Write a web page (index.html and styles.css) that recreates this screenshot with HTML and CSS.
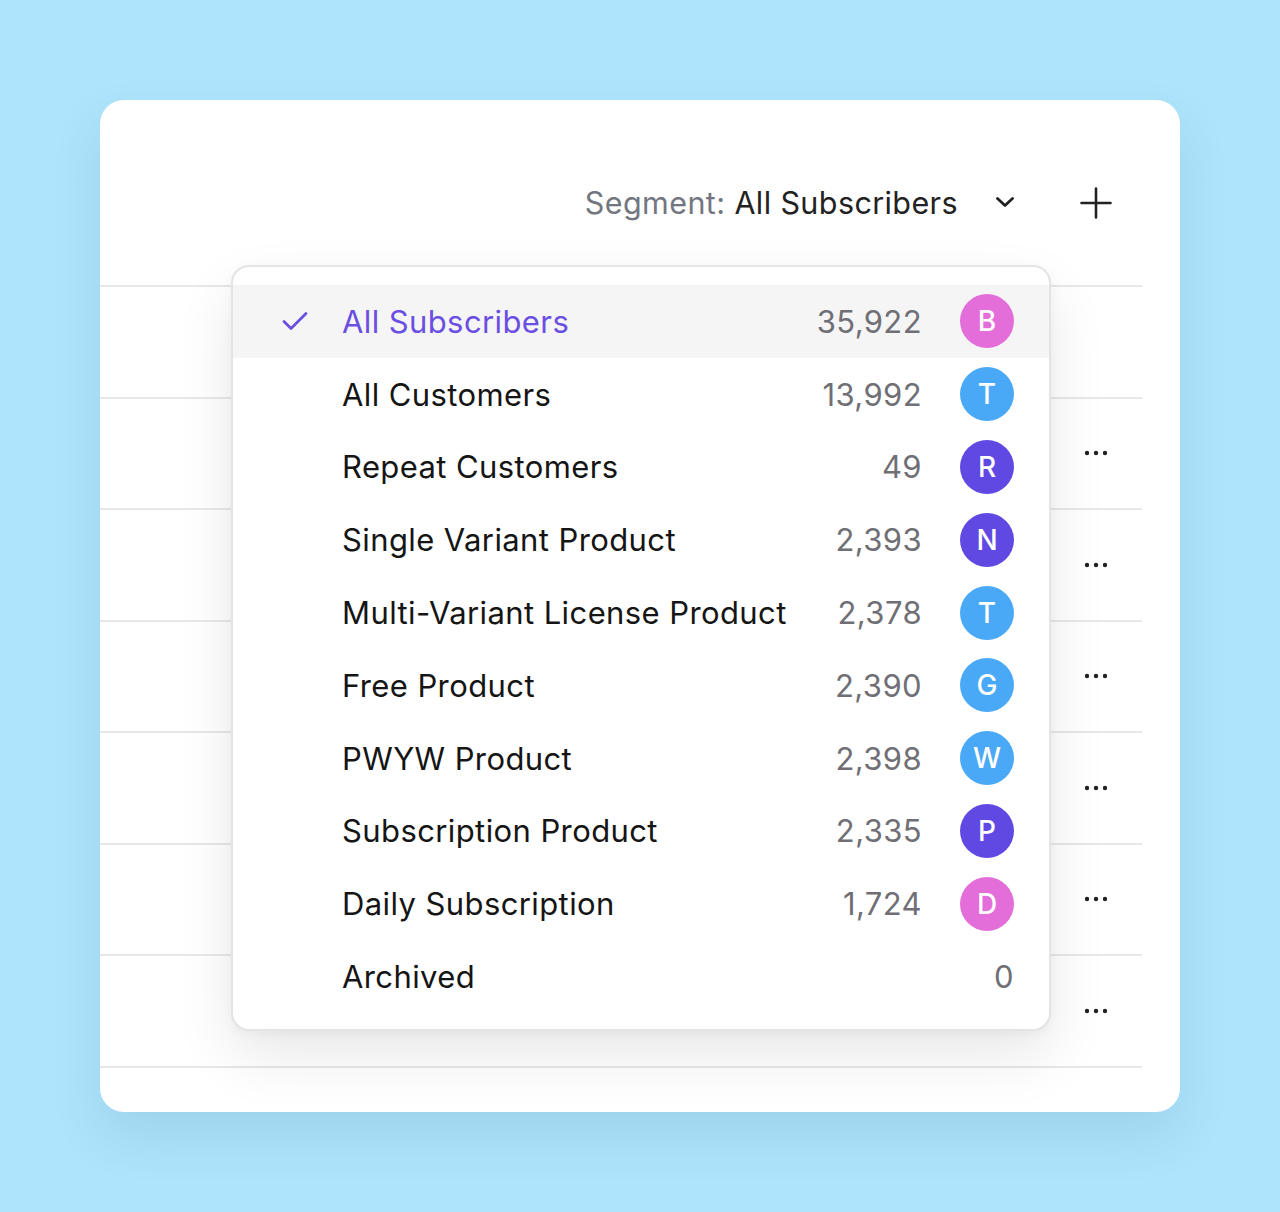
FILE: index.html
```
<!DOCTYPE html>
<html lang="en">
<head>
<meta charset="utf-8">
<title>Segments</title>
<link rel="stylesheet" href="styles.css">
</head>
<body>
<div class="card">
  <div class="header">
    <span class="seg-label">Segment:</span>
    <span class="seg-value">All Subscribers</span>
    <svg class="chevron" width="18" height="11" viewBox="0 0 18 11"><path d="M1.5 1.5 L9 8.5 L16.5 1.5" fill="none" stroke="#222" stroke-width="2.8" stroke-linecap="round" stroke-linejoin="round"/></svg>
    <svg class="plus" width="32" height="32" viewBox="0 0 32 32"><path d="M16 1.5 V30.5 M1.5 16 H30.5" fill="none" stroke="#222" stroke-width="2.6" stroke-linecap="round"/></svg>
  </div>
  <div class="table">
    <div class="trow"></div>
    <div class="trow"><svg class="dots" width="24" height="6" viewBox="0 0 24 6"><circle cx="3" cy="3" r="2.2"/><circle cx="12" cy="3" r="2.2"/><circle cx="21" cy="3" r="2.2"/></svg></div>
    <div class="trow"><svg class="dots" width="24" height="6" viewBox="0 0 24 6"><circle cx="3" cy="3" r="2.2"/><circle cx="12" cy="3" r="2.2"/><circle cx="21" cy="3" r="2.2"/></svg></div>
    <div class="trow"><svg class="dots" width="24" height="6" viewBox="0 0 24 6"><circle cx="3" cy="3" r="2.2"/><circle cx="12" cy="3" r="2.2"/><circle cx="21" cy="3" r="2.2"/></svg></div>
    <div class="trow"><svg class="dots" width="24" height="6" viewBox="0 0 24 6"><circle cx="3" cy="3" r="2.2"/><circle cx="12" cy="3" r="2.2"/><circle cx="21" cy="3" r="2.2"/></svg></div>
    <div class="trow"><svg class="dots" width="24" height="6" viewBox="0 0 24 6"><circle cx="3" cy="3" r="2.2"/><circle cx="12" cy="3" r="2.2"/><circle cx="21" cy="3" r="2.2"/></svg></div>
    <div class="trow"><svg class="dots" width="24" height="6" viewBox="0 0 24 6"><circle cx="3" cy="3" r="2.2"/><circle cx="12" cy="3" r="2.2"/><circle cx="21" cy="3" r="2.2"/></svg></div>
  </div>

  <div class="dropdown">
    <div class="item selected">
      <span class="check"><svg width="26" height="20" viewBox="0 0 26 20"><path d="M2 10.5 L9 17.5 L24 2.5" fill="none" stroke="#6a4fe2" stroke-width="2.8" stroke-linecap="round" stroke-linejoin="round"/></svg></span>
      <span class="name">All Subscribers</span>
      <span class="count">35,922</span>
      <span class="avatar pink">B</span>
    </div>
    <div class="item">
      <span class="check"></span>
      <span class="name">All Customers</span>
      <span class="count">13,992</span>
      <span class="avatar blue">T</span>
    </div>
    <div class="item">
      <span class="check"></span>
      <span class="name">Repeat Customers</span>
      <span class="count">49</span>
      <span class="avatar purple">R</span>
    </div>
    <div class="item">
      <span class="check"></span>
      <span class="name">Single Variant Product</span>
      <span class="count">2,393</span>
      <span class="avatar purple">N</span>
    </div>
    <div class="item">
      <span class="check"></span>
      <span class="name">Multi-Variant License Product</span>
      <span class="count">2,378</span>
      <span class="avatar blue">T</span>
    </div>
    <div class="item">
      <span class="check"></span>
      <span class="name">Free Product</span>
      <span class="count">2,390</span>
      <span class="avatar blue">G</span>
    </div>
    <div class="item">
      <span class="check"></span>
      <span class="name">PWYW Product</span>
      <span class="count">2,398</span>
      <span class="avatar blue">W</span>
    </div>
    <div class="item">
      <span class="check"></span>
      <span class="name">Subscription Product</span>
      <span class="count">2,335</span>
      <span class="avatar purple">P</span>
    </div>
    <div class="item">
      <span class="check"></span>
      <span class="name">Daily Subscription</span>
      <span class="count">1,724</span>
      <span class="avatar pink">D</span>
    </div>
    <div class="item">
      <span class="check"></span>
      <span class="name">Archived</span>
      <span class="count">0</span>
    </div>
  </div>
</div>
</body>
</html>
```

FILE: styles.css
```
* { box-sizing: border-box; }

html, body {
  margin: 0;
  padding: 0;
}

body {
  background: #aee4fc;
  font-family: Inter, "Noto Sans", "Liberation Sans", sans-serif;
  padding: 100px;
  width: 1280px;
  height: 1212px;
}

.card {
  position: relative;
  width: 1080px;
  height: 1012px;
  background: #ffffff;
  border-radius: 24px;
  box-shadow: 0 24px 50px rgba(40, 90, 120, 0.12);
  overflow: visible;
}

.header {
  height: 185px;
  padding-top: 20px;
  padding-right: 68px;
  display: flex;
  align-items: center;
  justify-content: flex-end;
  font-size: 30.5px;
  letter-spacing: 0.4px;
}

.seg-label {
  color: #737680;
  margin-right: 9px;
}

.seg-value {
  color: #222222;
}

.chevron {
  margin-left: 38px;
}

.plus {
  margin-left: 66px;
}

.table {
  margin-right: 38px;
  border-top: 2px solid #e8e8e8;
}

.trow {
  height: 111.5px;
  border-bottom: 2px solid #e8e8e8;
  display: flex;
  align-items: center;
  justify-content: flex-end;
  padding-right: 34px;
}

.dots {
  fill: #222222;
}

.dropdown {
  position: absolute;
  left: 131px;
  top: 165px;
  width: 820px;
  height: 766px;
  background: #ffffff;
  border: 2px solid #e4e4e4;
  border-radius: 18px;
  padding: 18px 0 16px;
  box-shadow: 0 26px 60px rgba(0, 0, 0, 0.09), 0 4px 12px rgba(0, 0, 0, 0.04);
}

.item {
  height: 72.8px;
  display: flex;
  align-items: center;
  padding-left: 49px;
  padding-right: 35px;
  font-size: 31px;
  letter-spacing: 0.4px;
  color: #151515;
}

.item.selected {
  background: #f5f5f6;
  color: #6a4fe2;
}

.check {
  width: 60px;
  flex: none;
  display: flex;
  align-items: center;
}

.name {
  flex: 1;
}

.count {
  color: #6f6f75;
  text-align: right;
}

.avatar {
  width: 54px;
  height: 54px;
  border-radius: 50%;
  margin-left: 38px;
  color: #ffffff;
  font-size: 28px;
  font-weight: 500;
  letter-spacing: 0;
  display: flex;
  align-items: center;
  justify-content: center;
  flex: none;
}

.pink { background: #e46ed9; }
.blue { background: #4aa9f6; }
.purple { background: #6049e3; }
```
